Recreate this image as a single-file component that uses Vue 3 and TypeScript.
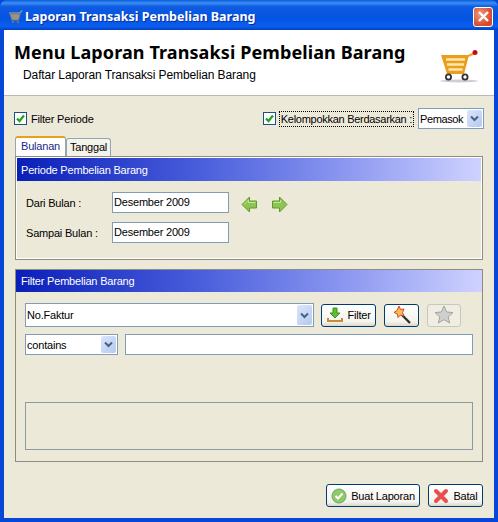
<script setup lang="ts">
const periods: { label: string; value: string }[] = [
  { label: 'Dari Bulan :', value: 'Desember 2009' },
  { label: 'Sampai Bulan :', value: 'Desember 2009' },
]
</script>

<template>
  <div class="window">
    <div class="titlebar">
      <svg class="title-icon" width="16" height="16" viewBox="0 0 16 16">
        <path d="M1 4h11l2-2.500" fill="none" stroke="#8a8f9c" stroke-width="1.500" />
        <path d="M2 5h10l-1.500 6H4z" fill="#9a9484" stroke="#77808f" />
        <circle cx="5" cy="13" r="1.300" fill="#666f7e" />
        <circle cx="10" cy="13" r="1.300" fill="#666f7e" />
      </svg>
      <span class="title-text">Laporan Transaksi Pembelian Barang</span>
      <div class="close-btn">
        <svg width="13" height="13" viewBox="0 0 13 13">
          <path d="M2 2l9 9M11 2l-9 9" stroke="#fff" stroke-width="2.400" fill="none" />
        </svg>
      </div>
    </div>

    <div class="client">
      <header class="banner">
        <div class="banner-text">
          <h1>Menu Laporan Transaksi Pembelian Barang</h1>
          <p>Daftar Laporan Transaksi Pembelian Barang</p>
        </div>
        <svg class="cart" width="42" height="34" viewBox="0 0 42 34">
          <ellipse cx="20" cy="31" rx="19" ry="1.500" fill="#cfcfcf" />
          <path d="M29 6l7-3" fill="none" stroke="#f0a526" stroke-width="2" />
          <path d="M2 5h28l-5 19H8z" fill="#ec9c1e" />
          <path d="M7 9.500h19M8 14.500h17M9.500 19.500h14" stroke="#fde9a8" stroke-width="2.600" />
          <circle cx="36" cy="2.500" r="2.500" fill="#b5121b" />
          <circle cx="9.500" cy="27" r="2.600" fill="#fff" stroke="#333" stroke-width="1.800" />
          <circle cx="26" cy="27" r="2.600" fill="#fff" stroke="#333" stroke-width="1.800" />
        </svg>
      </header>

      <main class="body">
        <div class="options">
          <label class="check">
            <span class="box">
              <svg width="11" height="11" viewBox="0 0 11 11"><path d="M2 5.500l2.500 2.500L9 2.500" fill="none" stroke="#21a121" stroke-width="2.200" /></svg>
            </span>
            Filter Periode
          </label>
          <div class="options-right">
            <label class="check">
              <span class="box">
                <svg width="11" height="11" viewBox="0 0 11 11"><path d="M2 5.500l2.500 2.500L9 2.500" fill="none" stroke="#21a121" stroke-width="2.200" /></svg>
              </span>
              <span class="focused">Kelompokkan Berdasarkan :</span>
            </label>
            <div class="combo small">
              <span class="combo-value">Pemasok</span>
              <span class="arrow">
                <svg width="9" height="7" viewBox="0 0 9 7"><path d="M1 1.500l3.500 3.500L8 1.500" fill="none" stroke="#4d6185" stroke-width="2" /></svg>
              </span>
            </div>
          </div>
        </div>

        <div class="tabs">
          <div class="tab active">Bulanan</div>
          <div class="tab">Tanggal</div>
        </div>
        <section class="tab-panel">
          <div class="gradient">Periode Pembelian Barang</div>
          <div class="period-grid">
            <template v-for="(p, i) in periods" :key="i">
              <span class="period-label">{{ p.label }}</span>
              <span class="text-field">{{ p.value }}</span>
              <div v-if="i === 0" class="arrows">
                <svg width="17" height="17" viewBox="0 0 17 17"><path d="M1 8.500L8.500 1v4h7v7h-7v4z" fill="#8ec454" stroke="#5e9a2a" /><path d="M3 8.500L7.500 4v2.500h7" fill="none" stroke="#c4e59c" /></svg>
                <svg width="17" height="17" viewBox="0 0 17 17"><path d="M16 8.500L8.500 1v4h-7v7h7v4z" fill="#8ec454" stroke="#5e9a2a" /><path d="M2.500 6.500h7V4" fill="none" stroke="#c4e59c" /></svg>
              </div>
              <span v-else></span>
            </template>
          </div>
        </section>

        <section class="filter-panel">
          <div class="gradient">Filter Pembelian Barang</div>
          <div class="filter-body">
            <div class="filter-row">
              <div class="combo wide">
                <span class="combo-value">No.Faktur</span>
                <span class="arrow tall">
                  <svg width="9" height="7" viewBox="0 0 9 7"><path d="M1 1.500l3.500 3.500L8 1.500" fill="none" stroke="#4d6185" stroke-width="2" /></svg>
                </span>
              </div>
              <button class="btn filter-btn">
                <svg width="18" height="18" viewBox="0 0 18 18">
                  <path d="M9 12L4 7h3V2h4v5h3z" fill="#5fc02e" stroke="#3f8f1c" />
                  <path d="M2 12v3h14v-3" fill="none" stroke="#c98a3a" stroke-width="2" />
                </svg>
                Filter
              </button>
              <button class="btn icon-btn wand">
                <svg width="20" height="20" viewBox="0 0 20 20">
                  <path d="M9 9l9 9" stroke="#333" stroke-width="2.400" />
                  <path d="M7 1l1.500 3.500L12 4l-1.500 3.500L12 11 8.500 10 6 12.500 5.500 9 2 7.500 5 5.500z" fill="#f7c04a" stroke="#d8413a" />
                </svg>
              </button>
              <button class="btn icon-btn disabled">
                <svg width="20" height="20" viewBox="0 0 20 20">
                  <path d="M10 1l2.700 6 6.300.6-4.800 4.200 1.500 6.200-5.700-3.300L4.300 18l1.500-6.200L1 7.600 7.300 7z" fill="#cfcfcf" stroke="#a3a3a3" />
                </svg>
              </button>
            </div>
            <div class="filter-row second">
              <div class="combo op">
                <span class="combo-value">contains</span>
                <span class="arrow">
                  <svg width="9" height="7" viewBox="0 0 9 7"><path d="M1 1.500l3.500 3.500L8 1.500" fill="none" stroke="#4d6185" stroke-width="2" /></svg>
                </span>
              </div>
              <span class="text-field grow"></span>
            </div>
            <div class="note-box"></div>
          </div>
        </section>

        <footer class="actions">
          <button class="btn action-btn buat">
            <svg width="16" height="16" viewBox="0 0 16 16">
              <circle cx="8" cy="8" r="7" fill="#8fcb63" stroke="#6f9f80" />
              <path d="M4.500 8l2.500 2.500 4.500-5" fill="none" stroke="#fff" stroke-width="2" />
            </svg>
            Buat Laporan
          </button>
          <button class="btn action-btn batal">
            <svg width="16" height="16" viewBox="0 0 16 16">
              <path d="M3 3l10 10M13 3L3 13" stroke="#e8504f" stroke-width="4" stroke-linecap="round" />
            </svg>
            Batal
          </button>
        </footer>
      </main>
    </div>
  </div>
</template>

<style>
html,
body {
  margin: 0;
  background: #0a3fd0;
}
</style>

<style scoped>
.window {
  width: 498px;
  height: 522px;
  box-sizing: border-box;
  display: flex;
  flex-direction: column;
  background: #0747d8;
  font-family: "Liberation Sans", sans-serif;
  font-size: 11px;
  letter-spacing: -0.200px;
  color: #000;
  overflow: hidden;
}
.titlebar {
  height: 30px;
  flex: none;
  box-sizing: border-box;
  display: flex;
  align-items: center;
  padding: 3px 5px 0 8px;
  background: linear-gradient(180deg, #0a5cd8 0%, #3b8ef5 10%, #0f5ce2 22%, #0454e2 60%, #0a5ef0 88%, #0340c0 100%);
  border-radius: 7px 7px 0 0;
}
.title-icon {
  flex: none;
}
.title-text {
  margin-left: 1px;
  font-family: "Noto Sans", sans-serif;
  font-weight: 700;
  font-size: 12.500px;
  letter-spacing: 0;
  color: #fff;
  flex: 1;
  text-shadow: 1px 1px 0 #0a2f9a;
}
.close-btn {
  width: 20px;
  height: 20px;
  box-sizing: border-box;
  border-radius: 3px;
  border: 1px solid #fff;
  background: radial-gradient(circle at 35% 35%, #ee9a7f, #d8482a 70%);
  display: flex;
  align-items: center;
  justify-content: center;
}
.client {
  flex: 1;
  margin: 0 4px 4px;
  display: flex;
  flex-direction: column;
  background: #ece9d8;
  min-height: 0;
}
.banner {
  height: 66px;
  flex: none;
  box-sizing: border-box;
  background: #fff;
  border-bottom: 1px solid #bdbbad;
  display: flex;
  justify-content: space-between;
  padding: 10px 13px 0 10px;
}
.banner h1 {
  margin: 0;
  font-family: "Noto Sans", sans-serif;
  font-size: 18px;
  letter-spacing: 0.100px;
  line-height: 24px;
  font-weight: 700;
}
.banner p {
  margin: 4px 0 0 9px;
  font-size: 12px;
  letter-spacing: -0.100px;
  line-height: 15px;
}
.cart {
  margin-top: 10px;
}
.body {
  flex: 1;
  padding: 0 11px;
  display: flex;
  flex-direction: column;
}
.options {
  height: 40px;
  display: flex;
  align-items: center;
  justify-content: space-between;
  box-sizing: border-box;
  padding-top: 5px;
}
.options-right {
  display: flex;
  align-items: center;
  gap: 5px;
  margin-right: -1px;
}
.check {
  display: flex;
  align-items: center;
  gap: 4px;
}
.options > .check {
  margin-left: -1px;
}
.box {
  width: 11px;
  height: 11px;
  border: 1px solid #1c5180;
  background: #fff;
  display: flex;
  align-items: center;
  justify-content: center;
}
.focused {
  outline: 1px dotted #000;
  line-height: 14px;
  padding: 0 1px;
  letter-spacing: -0.280px;
}
.combo {
  box-sizing: border-box;
  display: flex;
  align-items: center;
  justify-content: space-between;
  background: #fff;
  border: 1px solid #7f9db9;
  padding: 0 1px 0 1px;
}
.small {
  width: 66px;
  height: 21px;
}
.small .combo-value {
  letter-spacing: -0.400px;
}
.wide {
  width: 289px;
  height: 24px;
}
.op {
  width: 93px;
  height: 21px;
}
.arrow {
  width: 15px;
  height: 17px;
  background: linear-gradient(135deg, #dbe6fb, #b4c8f0);
  border-radius: 2px;
  display: flex;
  align-items: center;
  justify-content: center;
}
.arrow.tall {
  height: 20px;
}
.tabs {
  display: flex;
  height: 20px;
  align-items: flex-end;
}
.tab {
  box-sizing: border-box;
  height: 18px;
  padding: 0 3px;
  line-height: 16px;
  background: #f5f4ea;
  border: 1px solid #91a7b4;
  border-bottom: none;
  border-radius: 3px 3px 0 0;
}
.tab.active {
  height: 20px;
  padding: 0 5px;
  line-height: 17px;
  background: #fff;
  color: #1a2a8a;
  border-top: 2px solid #e6a020;
}
.tab-panel {
  height: 104px;
  box-sizing: border-box;
  border: 1px solid #8d8c80;
  box-shadow: inset 0 0 0 1px #fff;
  padding: 1px;
}
.gradient {
  height: 22px;
  line-height: 22px;
  padding-left: 5px;
  color: #fff;
  background: linear-gradient(90deg, #0a1fb8 0%, #4a5fdc 40%, #8a96f0 70%, #cfd2ff 100%);
}
.tab-panel .gradient {
  height: 23px;
  line-height: 24px;
  padding-left: 4px;
}
.period-grid {
  display: grid;
  grid-template-columns: 86px 117px 1fr;
  grid-auto-rows: 21px;
  row-gap: 9px;
  padding: 11px 0 0 9px;
  align-items: center;
}
.text-field {
  box-sizing: border-box;
  display: block;
  height: 21px;
  line-height: 19px;
  padding-left: 1px;
  background: #fff;
  border: 1px solid #7f9db9;
}
.arrows {
  display: flex;
  gap: 13px;
  padding: 3px 0 0 12px;
}
.filter-panel {
  margin-top: 9px;
  height: 193px;
  box-sizing: border-box;
  border: 1px solid #8d8c80;
}
.filter-body {
  padding: 11px 9px 0 9px;
}
.filter-row {
  display: flex;
  align-items: center;
}
.filter-row.second {
  margin-top: 7px;
  gap: 7px;
}
.grow {
  flex: 1;
}
.btn {
  box-sizing: border-box;
  height: 23px;
  display: inline-flex;
  align-items: center;
  justify-content: center;
  gap: 3px;
  padding: 0;
  font: inherit;
  letter-spacing: inherit;
  color: #000;
  background: linear-gradient(180deg, #fff 0%, #f4f3ec 80%, #dcd8c8 100%);
  border: 1px solid #003c74;
  border-radius: 3px;
}
.filter-btn {
  width: 55px;
  margin-left: 7px;
}
.icon-btn {
  width: 35px;
}
.wand {
  margin-left: 8px;
}
.disabled {
  margin-left: 8px;
  width: 34px;
  border-color: #c9c7ba;
  background: #f0eee2;
}
.note-box {
  margin-top: 47px;
  height: 48px;
  box-sizing: border-box;
  border: 1px solid #8a9aa5;
}
.actions {
  display: flex;
  justify-content: flex-end;
  gap: 8px;
  margin-top: 22px;
}
.action-btn {
  height: 23px;
  gap: 4px;
}
.buat {
  width: 94px;
}
.batal {
  width: 55px;
}
</style>
